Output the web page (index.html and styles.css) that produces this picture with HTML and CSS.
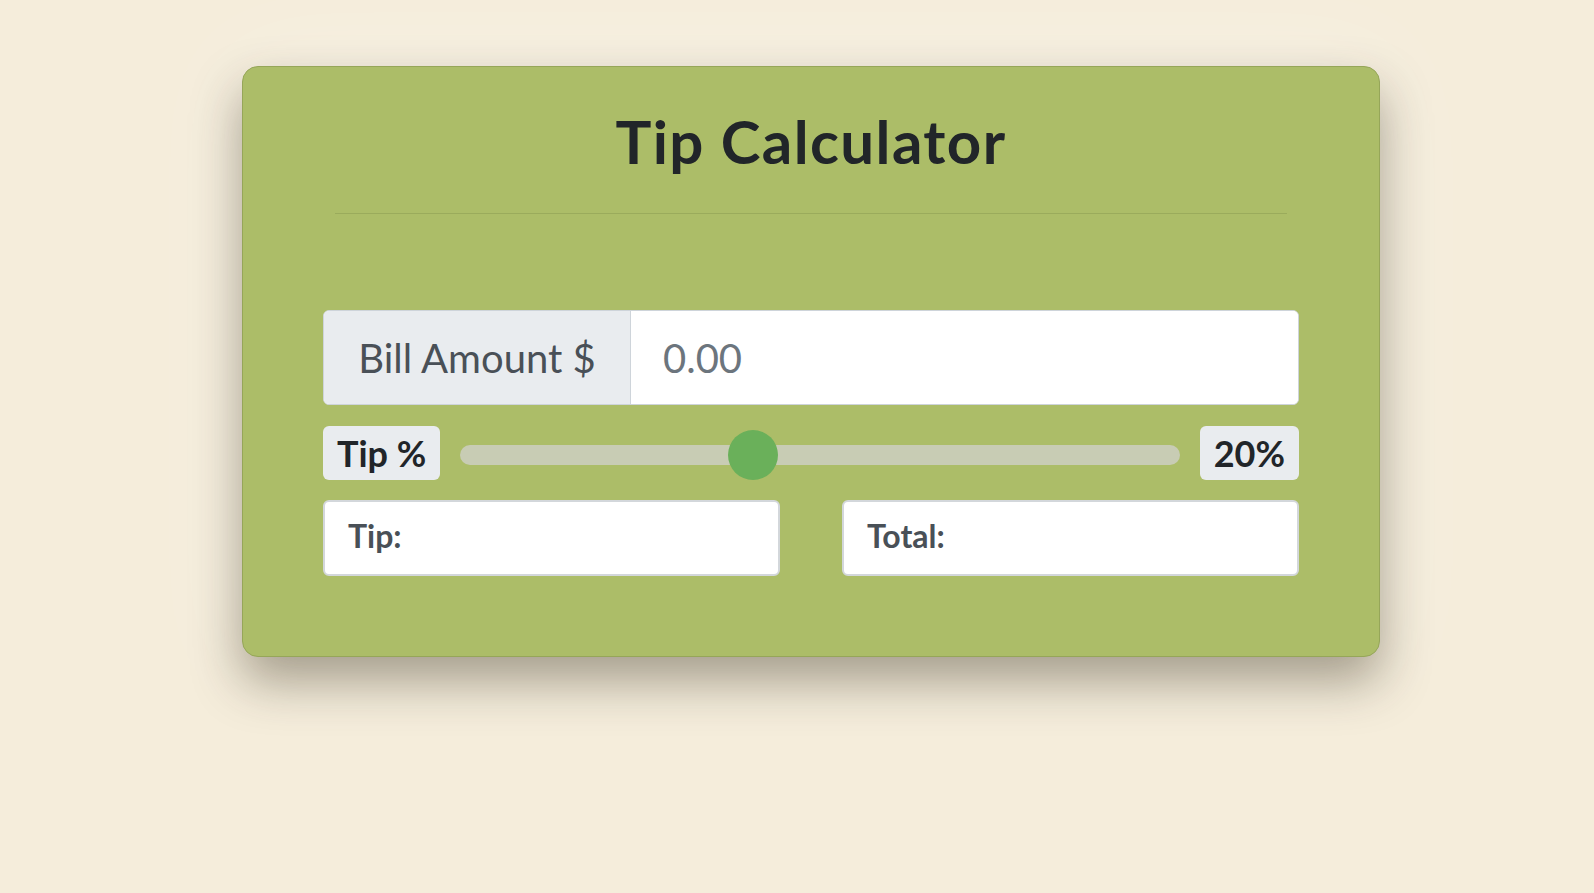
FILE: index.html
```html
<!DOCTYPE html>
<html lang="en">
<head>
<meta charset="utf-8">
<title>Tip Calculator</title>
<link rel="stylesheet" href="styles.css">
</head>
<body>
<main class="page">
  <section class="card">
    <h1 class="title">Tip Calculator</h1>
    <hr class="divider">
    <div class="form">
      <div class="bill-group">
        <span class="bill-addon">Bill Amount $</span>
        <input class="bill-input" type="text" placeholder="0.00">
      </div>
      <div class="tip-row">
        <span class="badge">Tip %</span>
        <input class="range" type="range" min="0" max="50" value="20">
        <span class="badge">20%</span>
      </div>
      <div class="results">
        <div class="result">Tip:</div>
        <div class="result">Total:</div>
      </div>
    </div>
  </section>
</main>
</body>
</html>
```

FILE: styles.css
```css
* { box-sizing: border-box; }

html, body {
  margin: 0;
  padding: 0;
  background: #f5eddb;
  font-family: Lato, "Open Sans", sans-serif;
}

.page {
  padding-top: 66px;
  padding-left: 242px;
  height: 893px;
}

.card {
  width: 1138px;
  height: 591px;
  background: #acbd68;
  border: 1px solid #96a659;
  border-radius: 16px;
  box-shadow: 0 24px 50px rgba(50, 40, 20, 0.42), 0 0 100px rgba(255, 255, 255, 0.4);
  display: flex;
  flex-direction: column;
  padding: 0 80px;
}

.title {
  margin: 0;
  padding-top: 38px;
  text-align: center;
  font-size: 60px;
  line-height: 72px;
  font-weight: 700;
  letter-spacing: 1.4px;
  color: #212529;
}

.divider {
  margin: 36px 12px 0;
  border: 0;
  border-top: 1px solid #9aab5c;
  height: 0;
}

.form {
  margin-top: 96px;
  display: flex;
  flex-direction: column;
}

.bill-group {
  display: flex;
  height: 95px;
  border: 1px solid #ced4da;
  border-radius: 6px;
  overflow: hidden;
  background: #fff;
}

.bill-addon {
  width: 307px;
  flex: none;
  background: #e9ecef;
  border-right: 1px solid #ced4da;
  color: #495057;
  font-size: 40px;
  display: flex;
  align-items: center;
  justify-content: center;
}

.bill-input {
  flex: 1;
  border: 0;
  outline: none;
  padding: 0 32px;
  font-family: inherit;
  font-size: 40px;
  color: #495057;
  background: #fff;
}

.bill-input::placeholder {
  color: #6c757d;
  opacity: 1;
}

.tip-row {
  margin-top: 21px;
  display: flex;
  align-items: center;
  gap: 20px;
  height: 54px;
}

.badge {
  height: 54px;
  padding: 0 14px;
  background: #e9ecef;
  border-radius: 6px;
  color: #212529;
  font-size: 36px;
  font-weight: 700;
  display: flex;
  align-items: center;
}

.range {
  -webkit-appearance: none;
  appearance: none;
  flex: 1;
  height: 20px;
  margin: 4px 0 0;
  background: #c8ccb4;
  border-radius: 10px;
  outline: none;
}

.range::-webkit-slider-thumb {
  -webkit-appearance: none;
  appearance: none;
  width: 50px;
  height: 50px;
  border-radius: 50%;
  background: #6ab05a;
  border: 0;
}

.results {
  margin-top: 20px;
  display: grid;
  grid-template-columns: 1fr 1fr;
  column-gap: 62px;
}

.result {
  height: 76px;
  background: #fff;
  border: 2px solid #d3d7db;
  border-radius: 6px;
  padding: 0 23px 6px;
  display: flex;
  align-items: center;
  color: #495057;
  font-size: 32px;
  font-weight: 700;
}
```
